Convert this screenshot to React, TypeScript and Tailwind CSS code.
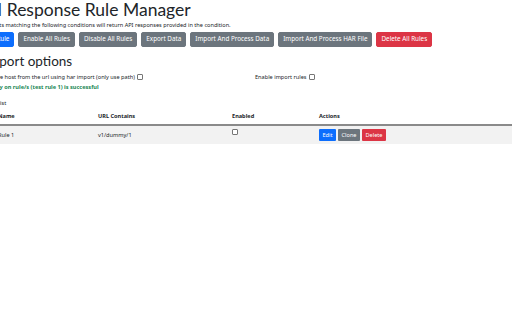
const rules = [{ name: 'Rule 1', url: 'v1/dummy/1', enabled: false }]

const TOP_BUTTONS: { label: string; color: string }[] = [
  { label: 'Add Rule', color: 'bg-[#0d6efd] border-[#0d6efd]' },
  { label: 'Enable All Rules', color: 'bg-[#6c757d] border-[#6c757d]' },
  { label: 'Disable All Rules', color: 'bg-[#6c757d] border-[#6c757d]' },
  { label: 'Export Data', color: 'bg-[#6c757d] border-[#6c757d]' },
  { label: 'Import And Process Data', color: 'bg-[#6c757d] border-[#6c757d]' },
  { label: 'Import And Process HAR File', color: 'bg-[#6c757d] border-[#6c757d]' },
  { label: 'Delete All Rules', color: 'bg-[#dc3545] border-[#dc3545]' },
]

function Box() {
  return <input type="checkbox" className="w-[6px] h-[6px] m-0 align-middle appearance-none border border-[#767676] rounded-[1px] bg-white inline-block" />
}

export default function App() {
  return (
    <div className="w-[512px] h-[320px] overflow-hidden bg-white text-[#212529]" style={{ fontFamily: '"Noto Sans", sans-serif' }}>
      <div className="ml-[-20px] w-[560px]">
        <h1 className="text-[17.5px] leading-[20px] ml-[-5px] font-normal" style={{ fontFamily: 'Lato, sans-serif' }}>
          API Response Rule Manager
        </h1>
        <p className="text-[5.6px] leading-[8px] mt-[1px]">Requests matching the following conditions will return API responses provided in the condition.</p>

        <div className="flex gap-[4px] mt-[3px] ml-[-2px]">
          {TOP_BUTTONS.map(b => (
            <button key={b.label} className={`${b.color} border text-white text-[6.3px] h-[15px] px-[4px] rounded-[2px] leading-none`}>
              {b.label}
            </button>
          ))}
        </div>

        {/* import options */}
        <h2 className="text-[13.5px] leading-[16px] mt-[6px] ml-[4.5px]" style={{ fontFamily: 'Lato, sans-serif' }}>
          Import options
        </h2>
        <div className="flex text-[5.6px] leading-[8px] mt-[4px] ml-[2px]">
          <div className="w-[273px] flex items-center gap-[2px]">
            <span>Remove host from the url using har import (only use path)</span>
            <Box />
          </div>
          <div className="flex items-center gap-[2px]">
            <span>Enable import rules</span>
            <Box />
          </div>
        </div>
        <p className="text-[5.6px] leading-[8px] mt-[2px] ml-[7px] font-bold text-[#198754]">
          Apply on rule/s (test rule 1) is successful
        </p>

        <p className="text-[5.6px] leading-[8px] mt-[8px] ml-[3px]">Rules list</p>

        {/* rules table */}
        <table className="mt-[2px] w-[540px] text-[5.6px] border-collapse">
          <thead>
            <tr className="border-b-[2px] border-[#8a8a8a]">
              <th className="text-left font-bold w-[118px] h-[16px] pl-[18px]">Name</th>
              <th className="text-left font-bold w-[134px]">URL Contains</th>
              <th className="text-left font-bold w-[87px]">Enabled</th>
              <th className="text-left font-bold">Actions</th>
            </tr>
          </thead>
          <tbody>
            {rules.map(r => (
              <tr key={r.name} className="bg-[#f2f2f2] h-[19px]">
                <td className="align-middle pl-[18px]">{r.name}</td>
                <td className="align-middle">{r.url}</td>
                <td className="align-top">
                  <div className="flex pt-[3px]"><Box /></div>
                </td>
                <td className="align-middle">
                  <div className="flex gap-[2px]">
                    <button className="bg-[#0d6efd] text-white h-[12px] px-[3.5px] rounded-[1px] text-[5.6px]">Edit</button>
                    <button className="bg-[#6c757d] text-white h-[12px] px-[3.5px] rounded-[1px] text-[5.6px]">Clone</button>
                    <button className="bg-[#dc3545] text-white h-[12px] px-[3.5px] rounded-[1px] text-[5.6px]">Delete</button>
                  </div>
                </td>
              </tr>
            ))}
          </tbody>
        </table>
      </div>
    </div>
  )
}
